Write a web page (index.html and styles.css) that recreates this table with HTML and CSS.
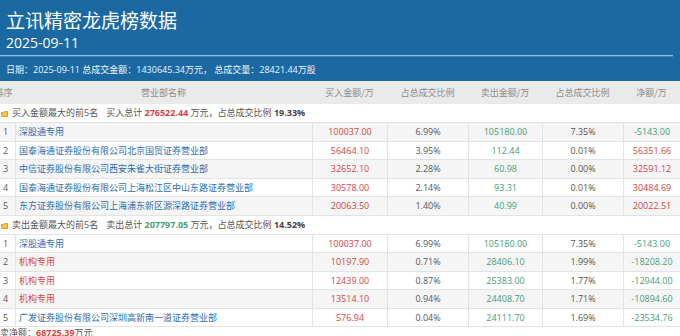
FILE: index.html
```html
<!DOCTYPE html>
<html lang="zh-CN">
<head>
<meta charset="utf-8">
<title>立讯精密龙虎榜数据</title>
<link rel="stylesheet" href="styles.css">
</head>
<body>
<header class="hero">
  <h1 class="hero-title">立讯精密龙虎榜数据</h1>
  <div class="hero-date">2025-09-11</div>
  <div class="hero-rule"></div>
  <div class="hero-info">日期：2025-09-11 总成交金额：1430645.34万元， 总成交量：28421.44万股</div>
</header>
<main class="board">
  <table class="lhb">
    <colgroup>
      <col class="c-seq"><col class="c-name"><col class="c-buy"><col class="c-bratio"><col class="c-sell"><col class="c-sratio"><col class="c-net">
    </colgroup>
    <thead>
      <tr><th>排序</th><th>营业部名称</th><th>买入金额/万</th><th>占总成交比例</th><th>卖出金额/万</th><th>占总成交比例</th><th>净额/万</th></tr>
    </thead>
    <tbody>
      <tr class="sec"><td colspan="7"><svg class="sec-ico" width="7" height="6" viewBox="0 0 7 6"><path d="M0.5 1.5 H2.5 L3.2 0.6 H6.5 V5.5 H0.5 Z" fill="#f6c343" stroke="#c9911c" stroke-width="0.8"/></svg><span class="sec-lbl">买入金额最大的前5名</span>买入总计 <b class="red">276522.44</b> 万元，占总成交比例 <b>19.33%</b></td></tr>
      <tr class="alt"><td class="seq">1</td><td class="nm blue">深股通专用</td><td class="red">100037.00</td><td>6.99%</td><td class="green">105180.00</td><td>7.35%</td><td class="green">-5143.00</td></tr>
      <tr><td class="seq">2</td><td class="nm blue">国泰海通证券股份有限公司北京国贸证券营业部</td><td class="red">56464.10</td><td>3.95%</td><td class="green">112.44</td><td>0.01%</td><td class="red">56351.66</td></tr>
      <tr class="alt"><td class="seq">3</td><td class="nm blue">中信证券股份有限公司西安朱雀大街证券营业部</td><td class="red">32652.10</td><td>2.28%</td><td class="green">60.98</td><td>0.00%</td><td class="red">32591.12</td></tr>
      <tr><td class="seq">4</td><td class="nm blue">国泰海通证券股份有限公司上海松江区中山东路证券营业部</td><td class="red">30578.00</td><td>2.14%</td><td class="green">93.31</td><td>0.01%</td><td class="red">30484.69</td></tr>
      <tr class="alt"><td class="seq">5</td><td class="nm blue">东方证券股份有限公司上海浦东新区源深路证券营业部</td><td class="red">20063.50</td><td>1.40%</td><td class="green">40.99</td><td>0.00%</td><td class="red">20022.51</td></tr>
      <tr class="sec"><td colspan="7"><svg class="sec-ico" width="7" height="6" viewBox="0 0 7 6"><path d="M0.5 1.5 H2.5 L3.2 0.6 H6.5 V5.5 H0.5 Z" fill="#f6c343" stroke="#c9911c" stroke-width="0.8"/></svg><span class="sec-lbl">卖出金额最大的前5名</span>卖出总计 <b class="green">207797.05</b> 万元，占总成交比例 <b>14.52%</b></td></tr>
      <tr><td class="seq">1</td><td class="nm blue">深股通专用</td><td class="red">100037.00</td><td>6.99%</td><td class="green">105180.00</td><td>7.35%</td><td class="green">-5143.00</td></tr>
      <tr class="alt"><td class="seq">2</td><td class="nm red">机构专用</td><td class="red">10197.90</td><td>0.71%</td><td class="green">28406.10</td><td>1.99%</td><td class="green">-18208.20</td></tr>
      <tr><td class="seq">3</td><td class="nm red">机构专用</td><td class="red">12439.00</td><td>0.87%</td><td class="green">25383.00</td><td>1.77%</td><td class="green">-12944.00</td></tr>
      <tr class="alt"><td class="seq">4</td><td class="nm red">机构专用</td><td class="red">13514.10</td><td>0.94%</td><td class="green">24408.70</td><td>1.71%</td><td class="green">-10894.60</td></tr>
      <tr><td class="seq">5</td><td class="nm blue">广发证券股份有限公司深圳高新南一道证券营业部</td><td class="red">576.94</td><td>0.04%</td><td class="green">24111.70</td><td>1.69%</td><td class="green">-23534.76</td></tr>
    </tbody>
  </table>
  <div class="net-sum">卖净额：<b class="red">68725.39</b>万元</div>
</main>
</body>
</html>
```

FILE: styles.css
```css
html, body {
  margin: 0;
  padding: 0;
  background: #ffffff;
  overflow: hidden;
}
body {
  font-family: "Open Sans", "Noto Sans CJK SC", sans-serif;
  color: #555555;
}
.hero {
  background: #1b69a3;
  color: #ffffff;
  padding: 6px 0 2px 6px;
}
.hero-title {
  margin: 0;
  font-family: "Noto Sans CJK SC", sans-serif;
  font-weight: 400;
  font-size: 19px;
  line-height: 28px;
}
.hero-date {
  font-size: 14px;
  line-height: 18px;
}
.hero-rule {
  height: 1px;
  margin: 3px 7px 0 -6px;
  background: #8cc0ea;
  box-shadow: 0 1px 0 #3f83bd;
}
.hero-info {
  margin-top: 5px;
  font-size: 9px;
  line-height: 18px;
  color: #eef5fb;
}
.board {
  margin-left: -8px;
}
.lhb {
  width: 688px;
  table-layout: fixed;
  border-collapse: separate;
  border-spacing: 0;
  font-size: 9px;
}
.c-seq { width: 23px; }
.c-name { width: 297px; }
.c-buy { width: 75px; }
.c-bratio { width: 81px; }
.c-sell { width: 74px; }
.c-sratio { width: 81px; }
.c-net { width: 57px; }
.lhb th {
  background: #eaeaea;
  color: #8d8d8d;
  font-family: "Noto Sans CJK SC", serif;
  font-weight: 400;
  font-size: 9px;
  line-height: 23px;
  padding: 0;
  text-align: center;
  white-space: nowrap;
}
.lhb td {
  padding: 0;
  line-height: 17.5px;
  border-bottom: 1px solid #e3e3e3;
  border-left: 1px solid #e3e3e3;
  text-align: center;
  white-space: nowrap;
  overflow: hidden;
}
.lhb td:first-child {
  border-left: none;
}
.lhb tr.alt td {
  background: #f5f5f5;
}
.lhb td.seq {
  text-align: left;
  padding-left: 11px;
  color: #555555;
}
.lhb td.nm {
  text-align: left;
  padding-left: 3px;
  font-family: "Noto Sans CJK SC", sans-serif;
}
.lhb tr.sec td {
  text-align: left;
  line-height: 18px;
  padding-left: 9px;
  background: #ffffff;
  color: #555555;
  font-family: "Open Sans", "Noto Sans CJK SC", sans-serif;
}
.sec-ico {
  vertical-align: -1px;
  margin-right: 4px;
}
.sec-lbl {
  margin-right: 8px;
}
.lhb b {
  font-weight: 700;
  color: #444444;
}
.red, .lhb b.red, .net-sum b.red { color: #d5463f; }
.green, .lhb b.green { color: #44a077; }
.blue { color: #2b6eb0; }
.net-sum {
  padding-left: 8px;
  font-size: 9px;
  line-height: 12px;
  color: #555555;
}
.net-sum b {
  font-weight: 700;
}
```
